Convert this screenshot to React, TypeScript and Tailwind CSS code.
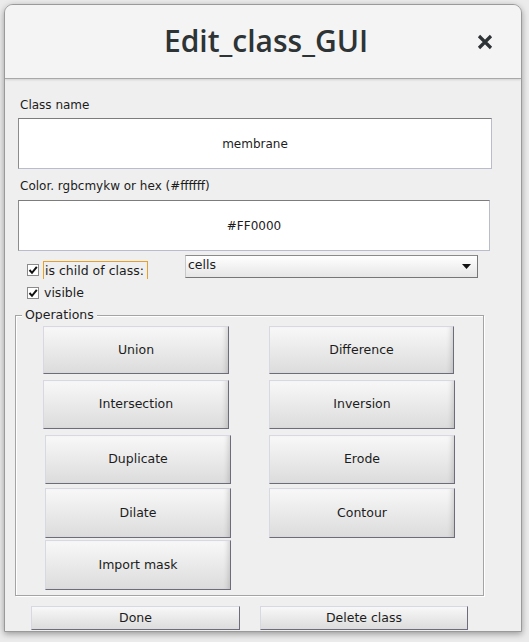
import React from "react";

const F = "font-['DejaVu_Sans',sans-serif]";

function Btn({ label, className = "" }: { label: string; className?: string }) {
  return (
    <div
      className={`flex items-center justify-center border border-t-[#d8d8e2] border-l-[#d8d8e2] border-r-[#6c6c7c] border-b-[#6c6c7c] bg-linear-to-b from-[#f8f8f8] to-[#dcdcdc] shadow-[inset_-5px_0_5px_-3px_rgba(0,0,0,0.15)] text-[12.5px] text-[#1c1c1c] ${F} ${className}`}
    >
      {label}
    </div>
  );
}

function Check() {
  return (
    <div className="w-[12px] h-[12px] border border-[#8a8a8a] bg-white flex items-center justify-center">
      <svg width="10" height="10" viewBox="0 0 10 10">
        <path d="M1.5 5 L4 7.8 L8.8 1.8" fill="none" stroke="#111" strokeWidth="2" />
      </svg>
    </div>
  );
}

export default function App() {
  return (
    <div className="w-[529px] h-[642px] bg-[#ebebeb] pl-[4px] pt-[4px] overflow-hidden">
      <div className="w-[518px] h-[628px] rounded-t-[9px] border border-[#9a9a9a] shadow-[0_2px_6px_rgba(0,0,0,0.35)] bg-[#efefef] flex flex-col overflow-hidden">
        {/* header */}
        <div className="h-[74px] shrink-0 bg-[#f4f4f4] border-b border-[#a8a8a8] shadow-[0_1px_2px_rgba(0,0,0,0.12)] flex items-center relative">
          <div className="flex-1 text-center font-['Open_Sans',sans-serif] font-semibold text-[30px] leading-[36px] text-[#2e3436] pl-[6px] -mt-[1px]">
            Edit_class_GUI
          </div>
          <svg
            className="absolute left-[472px] top-[29px]"
            width="16"
            height="16"
            viewBox="0 0 16 16"
          >
            <path d="M2 2 L14 14 M14 2 L2 14" stroke="#2e3436" strokeWidth="3.2" />
          </svg>
        </div>

        {/* body */}
        <div className={`flex flex-col ${F} text-[#1c1c1c]`}>
          <div className="ml-[15px] mt-[19px] text-[12px] leading-[14px]">Class name</div>
          <div className="ml-[13px] mt-[6px] w-[474px] h-[51px] bg-white border border-t-[#7c7c7c] border-l-[#8c8c8c] border-r-[#b8bccc] border-b-[#b8bccc] flex items-center justify-center text-[12px] pt-[1px]">
            membrane
          </div>
          <div className="ml-[15px] mt-[10px] text-[12px] leading-[14px]">
            Color. rgbcmykw or hex (#ffffff)
          </div>
          <div className="ml-[13px] mt-[7px] w-[472px] h-[51px] bg-white border border-t-[#7c7c7c] border-l-[#8c8c8c] border-r-[#b8bccc] border-b-[#b8bccc] flex items-center justify-center text-[12px] pt-[1px]">
            #FF0000
          </div>

          {/* child row */}
          <div className="mt-[4px] h-[23px] flex items-start">
            <div className="ml-[22px] mt-[9px]">
              <Check />
            </div>
            <div className="ml-[4px] mt-[6px] w-[105px] h-[18px] border-t border-l border-r border-[#e8a028] text-[12.5px] leading-[16px] pl-[1px] pt-[1px]">
              is child of class:
            </div>
            <div className="ml-[37px] w-[293px] h-[23px] border border-[#767676] border-l-[#c8c8c8] border-t-[#8a8a8a] bg-linear-to-b from-[#ffffff] to-[#e6e6e6] flex items-center justify-between pl-[2px] pr-[6px] text-[12.5px]">
              <span className="-mt-[2px]">cells</span>
              <svg width="9" height="5" viewBox="0 0 9 5">
                <path d="M0 0 H9 L4.5 5 Z" fill="#111" />
              </svg>
            </div>
          </div>

          {/* visible row */}
          <div className="mt-[8px] h-[16px] flex items-start">
            <div className="ml-[22px] mt-[1px]">
              <Check />
            </div>
            <div className="ml-[4px] -mt-[1px] text-[12.5px] leading-[16px] pl-[1px]">visible</div>
          </div>

          {/* Operations group */}
          <div className="ml-[10px] mt-[13px] w-[469px] h-[281px] border border-[#a4a4a4] shadow-[1px_1px_0_#ffffff,inset_1px_1px_0_#ffffff] relative flex flex-col">
            <div className="absolute left-[6px] -top-[9px] px-[3px] bg-[#efefef] text-[12.5px] leading-[16px]">
              Operations
            </div>
            <div className="mt-[10px] flex">
              <Btn label="Union" className="ml-[27px] w-[186px] h-[48px]" />
              <Btn label="Difference" className="ml-[40px] w-[185px] h-[48px]" />
            </div>
            <div className="mt-[6px] flex">
              <Btn label="Intersection" className="ml-[27px] w-[186px] h-[49px]" />
              <Btn label="Inversion" className="ml-[40px] w-[186px] h-[49px]" />
            </div>
            <div className="mt-[6px] flex">
              <Btn label="Duplicate" className="ml-[29px] w-[186px] h-[49px]" />
              <Btn label="Erode" className="ml-[38px] w-[186px] h-[49px]" />
            </div>
            <div className="mt-[4px] flex">
              <Btn label="Dilate" className="ml-[29px] w-[186px] h-[50px]" />
              <Btn label="Contour" className="ml-[38px] w-[186px] h-[50px]" />
            </div>
            <div className="mt-[2px] flex">
              <Btn label="Import mask" className="ml-[29px] w-[186px] h-[50px]" />
            </div>
          </div>

          {/* bottom buttons */}
          <div className="mt-[10px] flex">
            <Btn label="Done" className="ml-[26px] w-[209px] h-[24px] shadow-none" />
            <Btn label="Delete class" className="ml-[20px] w-[208px] h-[24px] shadow-none" />
          </div>
        </div>
      </div>
    </div>
  );
}
